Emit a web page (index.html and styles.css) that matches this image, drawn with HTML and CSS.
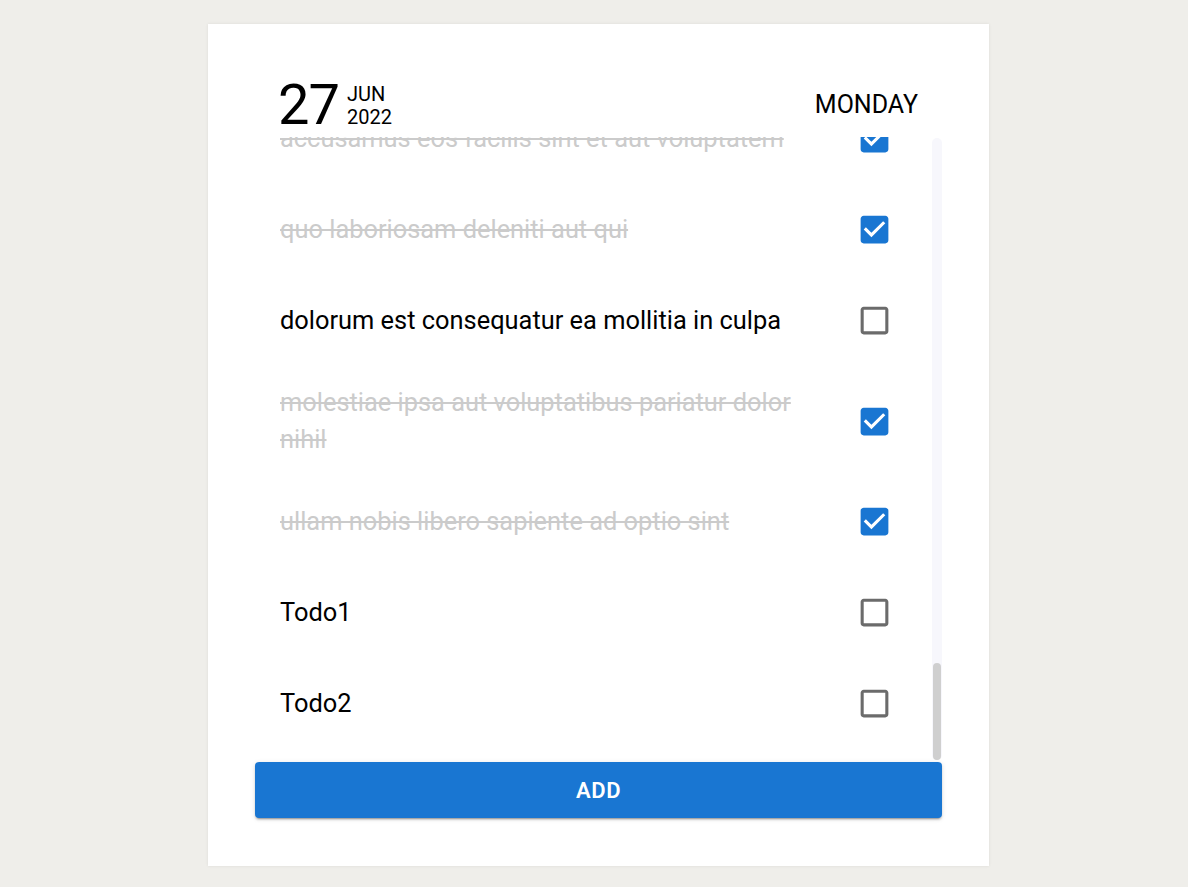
FILE: index.html
```html
<!DOCTYPE html>
<html lang="en">
<head>
<meta charset="utf-8">
<title>Todo</title>
<link rel="stylesheet" href="styles.css">
</head>
<body>
<main class="card">
  <header class="header">
    <div class="date">
      <span class="day">27</span>
      <span class="month-year"><span>JUN</span><span>2022</span></span>
    </div>
    <div class="weekday">MONDAY</div>
  </header>
  <div class="list-area">
    <div class="scroller">
      <ul class="list">
        <li class="row"><span class="text">delectus aut autem</span><span class="check"><svg viewBox="0 0 24 24"><path class="off" d="M19 5v14H5V5h14m0-2H5c-1.1 0-2 .9-2 2v14c0 1.1.9 2 2 2h14c1.1 0 2-.9 2-2V5c0-1.1-.9-2-2-2z"/></svg></span></li>
        <li class="row"><span class="text">quis ut nam facilis et officia qui</span><span class="check"><svg viewBox="0 0 24 24"><path class="off" d="M19 5v14H5V5h14m0-2H5c-1.1 0-2 .9-2 2v14c0 1.1.9 2 2 2h14c1.1 0 2-.9 2-2V5c0-1.1-.9-2-2-2z"/></svg></span></li>
        <li class="row"><span class="text">fugiat veniam minus</span><span class="check"><svg viewBox="0 0 24 24"><path class="off" d="M19 5v14H5V5h14m0-2H5c-1.1 0-2 .9-2 2v14c0 1.1.9 2 2 2h14c1.1 0 2-.9 2-2V5c0-1.1-.9-2-2-2z"/></svg></span></li>
        <li class="row done"><span class="text">et porro tempora</span><span class="check"><svg viewBox="0 0 24 24"><path class="on" d="M19 3H5c-1.11 0-2 .9-2 2v14c0 1.1.89 2 2 2h14c1.11 0 2-.9 2-2V5c0-1.1-.89-2-2-2zm-9 14l-5-5 1.41-1.41L10 14.17l7.59-7.59L19 8l-9 9z"/></svg></span></li>
        <li class="row"><span class="text">laboriosam mollitia et enim quasi adipisci quia provident illum</span><span class="check"><svg viewBox="0 0 24 24"><path class="off" d="M19 5v14H5V5h14m0-2H5c-1.1 0-2 .9-2 2v14c0 1.1.9 2 2 2h14c1.1 0 2-.9 2-2V5c0-1.1-.9-2-2-2z"/></svg></span></li>
        <li class="row"><span class="text">qui ullam ratione quibusdam voluptatem quia omnis</span><span class="check"><svg viewBox="0 0 24 24"><path class="off" d="M19 5v14H5V5h14m0-2H5c-1.1 0-2 .9-2 2v14c0 1.1.9 2 2 2h14c1.1 0 2-.9 2-2V5c0-1.1-.9-2-2-2z"/></svg></span></li>
        <li class="row"><span class="text">illo expedita consequatur quia in</span><span class="check"><svg viewBox="0 0 24 24"><path class="off" d="M19 5v14H5V5h14m0-2H5c-1.1 0-2 .9-2 2v14c0 1.1.9 2 2 2h14c1.1 0 2-.9 2-2V5c0-1.1-.9-2-2-2z"/></svg></span></li>
        <li class="row done"><span class="text">quo adipisci enim quam ut ab</span><span class="check"><svg viewBox="0 0 24 24"><path class="on" d="M19 3H5c-1.11 0-2 .9-2 2v14c0 1.1.89 2 2 2h14c1.11 0 2-.9 2-2V5c0-1.1-.89-2-2-2zm-9 14l-5-5 1.41-1.41L10 14.17l7.59-7.59L19 8l-9 9z"/></svg></span></li>
        <li class="row"><span class="text">molestiae perspiciatis ipsa</span><span class="check"><svg viewBox="0 0 24 24"><path class="off" d="M19 5v14H5V5h14m0-2H5c-1.1 0-2 .9-2 2v14c0 1.1.9 2 2 2h14c1.1 0 2-.9 2-2V5c0-1.1-.9-2-2-2z"/></svg></span></li>
        <li class="row done"><span class="text">illo est ratione doloremque quia maiores aut</span><span class="check"><svg viewBox="0 0 24 24"><path class="on" d="M19 3H5c-1.11 0-2 .9-2 2v14c0 1.1.89 2 2 2h14c1.11 0 2-.9 2-2V5c0-1.1-.89-2-2-2zm-9 14l-5-5 1.41-1.41L10 14.17l7.59-7.59L19 8l-9 9z"/></svg></span></li>
        <li class="row done"><span class="text">vero rerum temporibus dolor</span><span class="check"><svg viewBox="0 0 24 24"><path class="on" d="M19 3H5c-1.11 0-2 .9-2 2v14c0 1.1.89 2 2 2h14c1.11 0 2-.9 2-2V5c0-1.1-.89-2-2-2zm-9 14l-5-5 1.41-1.41L10 14.17l7.59-7.59L19 8l-9 9z"/></svg></span></li>
        <li class="row done"><span class="text">ipsa repellendus fugit nisi</span><span class="check"><svg viewBox="0 0 24 24"><path class="on" d="M19 3H5c-1.11 0-2 .9-2 2v14c0 1.1.89 2 2 2h14c1.11 0 2-.9 2-2V5c0-1.1-.89-2-2-2zm-9 14l-5-5 1.41-1.41L10 14.17l7.59-7.59L19 8l-9 9z"/></svg></span></li>
        <li class="row"><span class="text">et doloremque nulla</span><span class="check"><svg viewBox="0 0 24 24"><path class="off" d="M19 5v14H5V5h14m0-2H5c-1.1 0-2 .9-2 2v14c0 1.1.9 2 2 2h14c1.1 0 2-.9 2-2V5c0-1.1-.9-2-2-2z"/></svg></span></li>
        <li class="row done"><span class="text">repellendus sunt dolores architecto voluptatum</span><span class="check"><svg viewBox="0 0 24 24"><path class="on" d="M19 3H5c-1.11 0-2 .9-2 2v14c0 1.1.89 2 2 2h14c1.11 0 2-.9 2-2V5c0-1.1-.89-2-2-2zm-9 14l-5-5 1.41-1.41L10 14.17l7.59-7.59L19 8l-9 9z"/></svg></span></li>
        <li class="row done"><span class="text">ab voluptatum amet voluptas</span><span class="check"><svg viewBox="0 0 24 24"><path class="on" d="M19 3H5c-1.11 0-2 .9-2 2v14c0 1.1.89 2 2 2h14c1.11 0 2-.9 2-2V5c0-1.1-.89-2-2-2zm-9 14l-5-5 1.41-1.41L10 14.17l7.59-7.59L19 8l-9 9z"/></svg></span></li>
        <li class="row done"><span class="text">accusamus eos facilis sint et aut voluptatem</span><span class="check"><svg viewBox="0 0 24 24"><path class="on" d="M19 3H5c-1.11 0-2 .9-2 2v14c0 1.1.89 2 2 2h14c1.11 0 2-.9 2-2V5c0-1.1-.89-2-2-2zm-9 14l-5-5 1.41-1.41L10 14.17l7.59-7.59L19 8l-9 9z"/></svg></span></li>
        <li class="row done"><span class="text">quo laboriosam deleniti aut qui</span><span class="check"><svg viewBox="0 0 24 24"><path class="on" d="M19 3H5c-1.11 0-2 .9-2 2v14c0 1.1.89 2 2 2h14c1.11 0 2-.9 2-2V5c0-1.1-.89-2-2-2zm-9 14l-5-5 1.41-1.41L10 14.17l7.59-7.59L19 8l-9 9z"/></svg></span></li>
        <li class="row"><span class="text">dolorum est consequatur ea mollitia in culpa</span><span class="check"><svg viewBox="0 0 24 24"><path class="off" d="M19 5v14H5V5h14m0-2H5c-1.1 0-2 .9-2 2v14c0 1.1.9 2 2 2h14c1.1 0 2-.9 2-2V5c0-1.1-.9-2-2-2z"/></svg></span></li>
        <li class="row done"><span class="text">molestiae ipsa aut voluptatibus pariatur dolor nihil</span><span class="check"><svg viewBox="0 0 24 24"><path class="on" d="M19 3H5c-1.11 0-2 .9-2 2v14c0 1.1.89 2 2 2h14c1.11 0 2-.9 2-2V5c0-1.1-.89-2-2-2zm-9 14l-5-5 1.41-1.41L10 14.17l7.59-7.59L19 8l-9 9z"/></svg></span></li>
        <li class="row done"><span class="text">ullam nobis libero sapiente ad optio sint</span><span class="check"><svg viewBox="0 0 24 24"><path class="on" d="M19 3H5c-1.11 0-2 .9-2 2v14c0 1.1.89 2 2 2h14c1.11 0 2-.9 2-2V5c0-1.1-.89-2-2-2zm-9 14l-5-5 1.41-1.41L10 14.17l7.59-7.59L19 8l-9 9z"/></svg></span></li>
        <li class="row"><span class="text">Todo1</span><span class="check"><svg viewBox="0 0 24 24"><path class="off" d="M19 5v14H5V5h14m0-2H5c-1.1 0-2 .9-2 2v14c0 1.1.9 2 2 2h14c1.1 0 2-.9 2-2V5c0-1.1-.9-2-2-2z"/></svg></span></li>
        <li class="row"><span class="text">Todo2</span><span class="check"><svg viewBox="0 0 24 24"><path class="off" d="M19 5v14H5V5h14m0-2H5c-1.1 0-2 .9-2 2v14c0 1.1.9 2 2 2h14c1.1 0 2-.9 2-2V5c0-1.1-.9-2-2-2z"/></svg></span></li>
      </ul>
    </div>
    <div class="scrollbar"><div class="thumb"></div></div>
  </div>
  <button class="add" type="button">ADD</button>
</main>
</body>
</html>
```

FILE: styles.css
```css
* { box-sizing: border-box; }

html, body {
  margin: 0;
  background: #efeeea;
  font-family: Roboto, "Noto Sans", Arial, sans-serif;
  color: #000;
}

body {
  padding: 24px 0 21px 208px;
}

.card {
  width: 781px;
  height: 842px;
  background: #fff;
  box-shadow: 0 0 3px rgba(0, 0, 0, 0.08);
  padding: 48px 47px;
  display: flex;
  flex-direction: column;
}

.header {
  height: 65px;
  flex: none;
  display: flex;
  align-items: center;
  justify-content: space-between;
  padding: 0 24px 0 25px;
}

.date {
  display: flex;
  align-items: center;
  gap: 8px;
}

.day {
  font-size: 56px;
  line-height: 1;
  letter-spacing: -1px;
  margin-left: -2px;
}

.month-year {
  display: flex;
  flex-direction: column;
  font-size: 20px;
  line-height: 23px;
  padding-top: 2px;
}

.weekday {
  font-size: 25px;
  line-height: 1;
}

.list-area {
  height: 623px;
  flex: none;
  display: flex;
}

.scroller {
  flex: 1;
  overflow-y: auto;
  scrollbar-width: none;
  display: flex;
  flex-direction: column-reverse;
}

.scroller::-webkit-scrollbar {
  display: none;
}

.scrollbar {
  width: 10px;
  flex: none;
  margin-top: 1px;
  background: #f7f7fc;
  border-radius: 5px;
  display: flex;
  flex-direction: column;
  justify-content: flex-end;
  padding: 0 1px;
}

.thumb {
  height: 97px;
  background: #cfcfcf;
  border-radius: 4px;
}

.list {
  list-style: none;
  margin: 0;
  padding: 0 0 11px;
}

.row {
  display: flex;
  align-items: center;
  padding: 18px 30px 18px 25px;
  gap: 30px;
}

.text {
  flex: 1;
  font-size: 25.4px;
  line-height: 37px;
}

.done .text {
  color: #cbcbcb;
  text-decoration: line-through;
}

.check {
  width: 55px;
  height: 55px;
  flex: none;
  display: flex;
  align-items: center;
  justify-content: center;
}

.check svg {
  width: 37px;
  height: 37px;
  display: block;
}

.check .off { fill: #6b6b6b; }
.check .on { fill: #1976d2; }

.add {
  margin-top: 2px;
  height: 56px;
  flex: none;
  width: 100%;
  border: none;
  border-radius: 4px;
  background: #1976d2;
  color: #fff;
  font-family: Roboto, "Noto Sans", Arial, sans-serif;
  font-size: 22px;
  font-weight: 600;
  letter-spacing: 0.6px;
  box-shadow: 0 3px 1px -2px rgba(0,0,0,0.2), 0 2px 2px 0 rgba(0,0,0,0.14), 0 1px 5px 0 rgba(0,0,0,0.12);
}
```
